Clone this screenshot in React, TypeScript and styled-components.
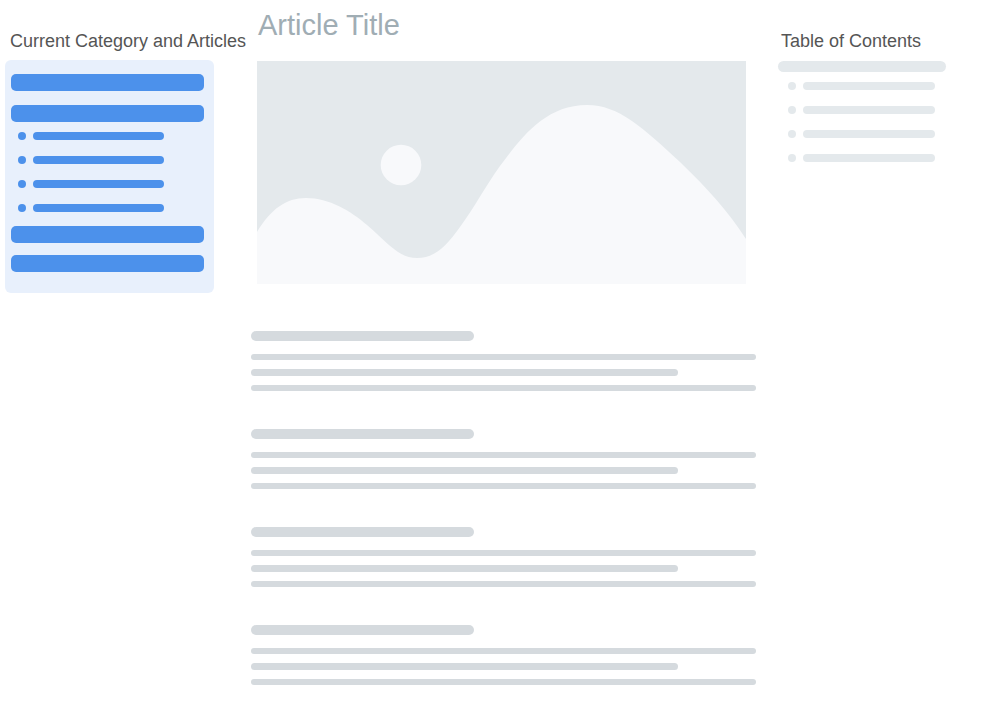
import React from "react";
import styled, { createGlobalStyle } from "styled-components";

const GlobalStyle = createGlobalStyle`
  *, *::before, *::after { box-sizing: border-box; }
  body {
    margin: 0;
    background: #ffffff;
    font-family: "Liberation Sans", Arial, sans-serif;
  }
`;

const blue = "#4c91eb";
const mist = "#e4e9ec";

const Page = styled.div`
  display: grid;
  grid-template-columns: 251px minmax(0, 1fr) 244px;
  align-items: start;
`;

const Sidebar = styled.nav`
  padding: 31px 0 0 5px;
`;

const Contents = styled.aside`
  padding: 31px 54px 0 22px;
`;

const Article = styled.main`
  padding: 9px 0 32px;
`;

const ColumnHeading = styled.h2<{ $indent: number }>`
  margin: 0;
  padding-left: ${(p) => p.$indent}px;
  font-size: 18px;
  line-height: 20px;
  font-weight: 400;
  color: #555555;
  white-space: nowrap;
`;

const CategoryPanel = styled.div`
  display: flex;
  flex-direction: column;
  gap: 12px;
  width: 209px;
  margin-top: 9px;
  padding: 14px 10px 21px 6px;
  border-radius: 6px;
  background: #e8f0fc;
`;

const OpenCategory = styled.div`
  margin: 2px 0;
`;

const CategoryBar = styled.div`
  height: 17px;
  border-radius: 5px;
  background: ${blue};
`;

const ContentsBar = styled.div`
  height: 11px;
  margin-top: 10px;
  border-radius: 6px;
  background: ${mist};
`;

const BulletList = styled.ul<{ $color: string; $inset: number; $bar: number }>`
  display: flex;
  flex-direction: column;
  gap: 16px;
  margin: 10px 0 0;
  padding: 0 0 0 ${(p) => p.$inset}px;
  list-style: none;
  color: ${(p) => p.$color};

  li::after {
    width: ${(p) => p.$bar}px;
  }
`;

const BulletItem = styled.li`
  display: flex;
  gap: 7px;

  &::before {
    content: "";
    width: 8px;
    height: 8px;
    border-radius: 50%;
    background: currentColor;
  }

  &::after {
    content: "";
    height: 8px;
    border-radius: 4px;
    background: currentColor;
  }
`;

const Title = styled.h1`
  margin: 0;
  padding-left: 7px;
  font-size: 29px;
  line-height: 32px;
  font-weight: 400;
  color: #a0adb4;
`;

const Hero = styled.div`
  padding: 20px 10px 0 6px;

  svg {
    display: block;
    width: 100%;
    height: auto;
  }
`;

const Sections = styled.div`
  display: flex;
  flex-direction: column;
  gap: 38px;
  margin-top: 47px;
`;

const Section = styled.section`
  display: flex;
  flex-direction: column;
  gap: 9px;
`;

const SectionHeading = styled.div`
  width: 223px;
  height: 10px;
  margin-bottom: 4px;
  border-radius: 5px;
  background: #d5dade;
`;

const TextLine = styled.div<{ $short?: boolean }>`
  height: ${(p) => (p.$short ? 7 : 6)}px;
  margin-right: ${(p) => (p.$short ? 78 : 0)}px;
  border-radius: 4px;
  background: #d5dade;
`;

const items = [1, 2, 3, 4];

function Bullets({ color, inset, bar }: { color: string; inset: number; bar: number }) {
  return (
    <BulletList $color={color} $inset={inset} $bar={bar}>
      {items.map((n) => (
        <BulletItem key={n} />
      ))}
    </BulletList>
  );
}

function Landscape() {
  return (
    <svg viewBox="0 0 489 223" aria-hidden="true">
      <rect width="489" height="223" fill={mist} />
      <circle cx="144" cy="104" r="20.3" fill="#f8f9fb" />
      <path
        fill="#f8f9fb"
        d="M0 171C14 148 29 137 49 137C72 137 94 150 110 164C133 184 142 197 160 197C179 197 190 184 203 166C217 147 228 126 243 105C264 77 288 44 330 44C362 44 386 67 423 101C450 127 471 150 489 178V223H0Z"
      />
    </svg>
  );
}

export default function App() {
  return (
    <>
      <GlobalStyle />
      <Page>
        <Sidebar aria-labelledby="categories">
          <ColumnHeading id="categories" $indent={5}>
            Current Category and Articles
          </ColumnHeading>
          <CategoryPanel>
            <CategoryBar />
            <OpenCategory>
              <CategoryBar />
              <Bullets color={blue} inset={7} bar={131} />
            </OpenCategory>
            <CategoryBar />
            <CategoryBar />
          </CategoryPanel>
        </Sidebar>

        <Article>
          <Title>Article Title</Title>
          <Hero>
            <Landscape />
          </Hero>
          <Sections>
            {items.map((n) => (
              <Section key={n}>
                <SectionHeading />
                <TextLine />
                <TextLine $short />
                <TextLine />
              </Section>
            ))}
          </Sections>
        </Article>

        <Contents aria-labelledby="contents">
          <ColumnHeading id="contents" $indent={3}>
            Table of Contents
          </ColumnHeading>
          <ContentsBar />
          <Bullets color={mist} inset={10} bar={132} />
        </Contents>
      </Page>
    </>
  );
}
